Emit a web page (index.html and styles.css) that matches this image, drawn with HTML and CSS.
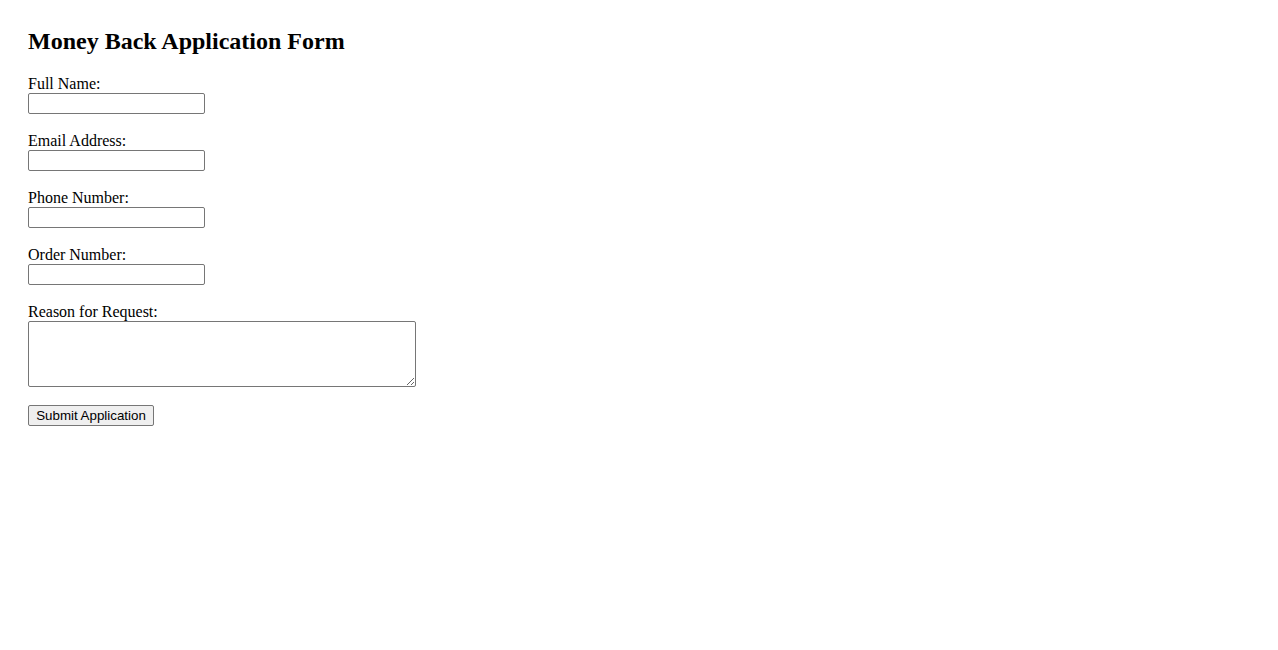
FILE: index.html
```html
<!DOCTYPE html>
<html lang="en">
<head>
<meta charset="utf-8">
<title>Money Back Application Form</title>
<link rel="stylesheet" href="styles.css">
</head>
<body>
<main class="page">
  <h2 class="title">Money Back Application Form</h2>
  <form class="form">
    <div class="field">
      <label class="label" for="name">Full Name:</label>
      <input class="input" id="name" type="text">
    </div>
    <div class="field">
      <label class="label" for="email">Email Address:</label>
      <input class="input" id="email" type="email">
    </div>
    <div class="field">
      <label class="label" for="phone">Phone Number:</label>
      <input class="input" id="phone" type="tel">
    </div>
    <div class="field">
      <label class="label" for="order">Order Number:</label>
      <input class="input" id="order" type="text">
    </div>
    <div class="field">
      <label class="label" for="reason">Reason for Request:</label>
      <textarea class="textarea" id="reason"></textarea>
    </div>
    <div class="actions">
      <button class="button" type="submit">Submit Application</button>
    </div>
  </form>
</main>
</body>
</html>
```
FILE: styles.css
```css
html, body {
  margin: 0;
  padding: 0;
  background: #ffffff;
}
body {
  font-family: "Liberation Serif", "Times New Roman", serif;
  font-size: 16px;
  color: #000000;
}
.page {
  padding: 28px;
}
.title {
  margin: 0 0 21px 0;
  font-size: 24px;
  font-weight: bold;
  line-height: 26px;
}
.form {
  display: flex;
  flex-direction: column;
  align-items: flex-start;
}
.field {
  display: flex;
  flex-direction: column;
  align-items: flex-start;
  margin-bottom: 18px;
}
.label {
  display: block;
  line-height: 18px;
}
.input {
  box-sizing: border-box;
  width: 177px;
  height: 21px;
  margin: 0;
  padding: 1px 2px;
  border: 1px solid #767676;
  border-radius: 2px;
  background: #ffffff;
  font-family: "Liberation Sans", Arial, sans-serif;
  font-size: 13.33px;
}
.textarea {
  box-sizing: border-box;
  display: block;
  width: 388px;
  height: 66px;
  margin: 0;
  padding: 2px;
  border: 1px solid #767676;
  border-radius: 2px;
  background: #ffffff;
  font-family: "Liberation Mono", monospace;
  font-size: 13.33px;
}
.button {
  box-sizing: border-box;
  width: 126px;
  height: 21px;
  margin: 0;
  padding: 1px 6px;
  border: 1px solid #767676;
  border-radius: 2px;
  background: #efefef;
  color: #000000;
  font-family: "Liberation Sans", Arial, sans-serif;
  font-size: 13.33px;
  line-height: normal;
}
```
